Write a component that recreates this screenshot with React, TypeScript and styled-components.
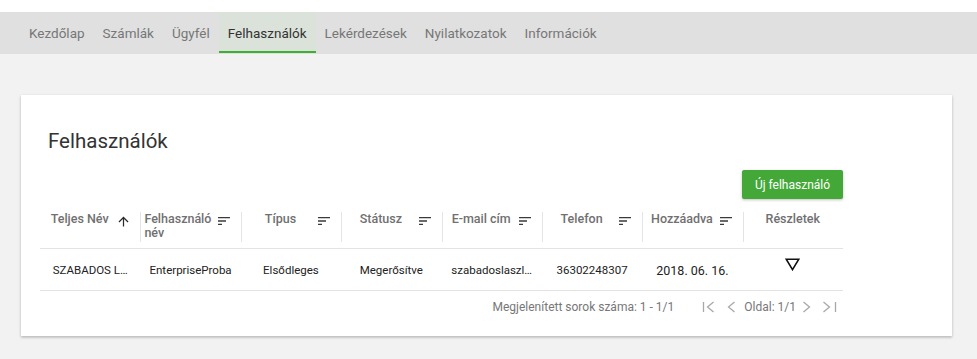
import React from 'react';
import styled, { createGlobalStyle } from 'styled-components';

const Global = createGlobalStyle`
  html, body { margin: 0; padding: 0; background: #f2f2f2; }
  body { font-family: Roboto, "Noto Sans", Arial, sans-serif; -webkit-font-smoothing: antialiased; }
`;

const Shell = styled.div`
  border-top: 12px solid #ffffff;
  min-height: 347px;
  background: #f2f2f2;
`;

const NavBar = styled.nav`
  height: 42px;
  background: #e0e0e0;
  display: flex;
  align-items: stretch;
  padding-left: 20px;
`;

const Tab = styled.a<{ $active?: boolean }>`
  display: flex;
  align-items: center;
  padding: 2px 9px 0;
  font-size: 13.5px;
  color: ${p => (p.$active ? '#333333' : '#777777')};
  background: ${p => (p.$active ? '#dbe2da' : 'transparent')};
  border-bottom: 2px solid ${p => (p.$active ? '#3cb034' : 'transparent')};
  margin-bottom: 1px;
  text-decoration: none;
  cursor: pointer;
`;

const Page = styled.main`
  padding: 41px 25px 20px 21px;
`;

const Card = styled.section`
  background: #ffffff;
  box-shadow: 0 1px 3px rgba(0, 0, 0, 0.2), 0 2px 2px rgba(0, 0, 0, 0.08);
  padding: 33px 109px 13px 19px;
`;

const Title = styled.h1`
  margin: 0 0 0 8px;
  font-size: 20.5px;
  line-height: 26px;
  font-weight: 400;
  color: #333333;
`;

const Toolbar = styled.div`
  display: flex;
  justify-content: flex-end;
  margin-top: 16px;
  margin-bottom: 13px;
`;

const GreenButton = styled.button`
  height: 29px;
  width: 101px;
  border: none;
  border-radius: 2px;
  background: #43a838;
  color: #ffffff;
  font-family: Roboto, "Noto Sans", Arial, sans-serif;
  font-size: 12px;
  box-shadow: 0 1px 3px rgba(0, 0, 0, 0.25);
  cursor: pointer;
`;

const Grid = styled.div`
  display: grid;
  grid-template-columns: repeat(8, 1fr);
  width: 803px;
`;

const HeadRow = styled(Grid)`
  padding-bottom: 6px;
  border-bottom: 1px solid #e3e3e3;
`;

const HeadCell = styled.div<{ $first?: boolean; $noIcon?: boolean }>`
  height: 30px;
  display: flex;
  align-items: flex-start;
  border-left: 1px solid ${p => (p.$first ? 'transparent' : '#e4e4e4')};
  padding: 0 ${p => (p.$noIcon ? '4px' : '9px')} 0 3px;
`;

const HeadLabel = styled.div`
  flex: 1;
  display: flex;
  justify-content: center;
  span {
    text-align: left;
    font-size: 12.5px;
    line-height: 14px;
    font-weight: 500;
    color: #707070;
  }
`;

const IconBox = styled.span`
  width: 16px;
  height: 16px;
  display: flex;
  align-items: center;
  justify-content: center;
  margin-top: 1px;
  flex: none;
`;

const BodyRow = styled(Grid)`
  height: 41px;
  border-bottom: 1px solid #e3e3e3;
  align-items: center;
`;

const Cell = styled.div<{ $big?: boolean }>`
  text-align: center;
  font-size: ${p => (p.$big ? '12.5px' : '11.5px')};
  color: #222222;
  white-space: nowrap;
  overflow: hidden;
  padding-top: ${p => (p.$big ? '2px' : '0')};
`;

const DetailCell = styled.div`
  display: flex;
  justify-content: center;
  padding-bottom: 10px;
`;

const Pager = styled.div`
  width: 803px;
  height: 32px;
  display: flex;
  align-items: center;
  justify-content: flex-end;
  padding-right: 6px;
  box-sizing: border-box;
  color: #777777;
  font-size: 12px;
`;

const PagerInfo = styled.span`
  margin-right: 28px;
`;

const PagerButton = styled.span<{ $gap: number }>`
  display: flex;
  align-items: center;
  color: #a8a8a8;
  margin-left: ${p => p.$gap}px;
`;

const PageLabel = styled.span`
  margin-left: 8px;
`;

const SortIcon = () => (
  <IconBox>
    <svg width="16" height="16" viewBox="0 0 24 24">
      <path fill="#3a3a3a" d="M3 18h6v-2H3v2zM3 6v2h18V6H3zm0 7h12v-2H3v2z" />
    </svg>
  </IconBox>
);

const ArrowUp = () => (
  <IconBox>
    <svg width="15" height="15" viewBox="0 0 24 24">
      <path fill="#2a2a2a" d="M4 12l1.41 1.41L11 7.83V20h2V7.83l5.58 5.59L20 12l-8-8-8 8z" />
    </svg>
  </IconBox>
);

const FirstIcon = () => (
  <svg width="13" height="14" viewBox="0 0 13 14" fill="none" stroke="currentColor" strokeWidth="1.3">
    <path d="M1.5 2v10M11.5 2L5.5 7l6 5" />
  </svg>
);
const PrevIcon = () => (
  <svg width="9" height="14" viewBox="0 0 9 14" fill="none" stroke="currentColor" strokeWidth="1.3">
    <path d="M7.5 2L1.5 7l6 5" />
  </svg>
);
const NextIcon = () => (
  <svg width="9" height="14" viewBox="0 0 9 14" fill="none" stroke="currentColor" strokeWidth="1.3">
    <path d="M1.5 2L7.5 7l-6 5" />
  </svg>
);
const LastIcon = () => (
  <svg width="15" height="14" viewBox="0 0 15 14" fill="none" stroke="currentColor" strokeWidth="1.3">
    <path d="M1.5 2L7.5 7l-6 5M13.5 2v10" />
  </svg>
);

const Triangle = () => (
  <svg width="15" height="13" viewBox="0 0 15 13">
    <polygon points="1.2,1.2 13.8,1.2 7.5,11.6" fill="none" stroke="#111" strokeWidth="1.6" strokeLinejoin="miter" />
  </svg>
);

const tabs = ['Kezdőlap', 'Számlák', 'Ügyfél', 'Felhasználók', 'Lekérdezések', 'Nyilatkozatok', 'Információk'];

const columns: { label: string; icon: 'up' | 'sort' | 'none' }[] = [
  { label: 'Teljes Név', icon: 'up' },
  { label: 'Felhasználó név', icon: 'sort' },
  { label: 'Típus', icon: 'sort' },
  { label: 'Státusz', icon: 'sort' },
  { label: 'E-mail cím', icon: 'sort' },
  { label: 'Telefon', icon: 'sort' },
  { label: 'Hozzáadva', icon: 'sort' },
  { label: 'Részletek', icon: 'none' },
];

export default function App() {
  return (
    <>
      <Global />
      <Shell>
        <NavBar>
          {tabs.map(t => (
            <Tab key={t} $active={t === 'Felhasználók'}>
              {t}
            </Tab>
          ))}
        </NavBar>
        <Page>
          <Card>
            <Title>Felhasználók</Title>
            <Toolbar>
              <GreenButton>Új felhasználó</GreenButton>
            </Toolbar>
            <HeadRow>
              {columns.map((c, i) => (
                <HeadCell key={c.label} $first={i === 0} $noIcon={c.icon === 'none'}>
                  <HeadLabel>
                    <span>{c.label}</span>
                  </HeadLabel>
                  {c.icon === 'up' && <ArrowUp />}
                  {c.icon === 'sort' && <SortIcon />}
                </HeadCell>
              ))}
            </HeadRow>
            <BodyRow>
              <Cell>SZABADOS L…</Cell>
              <Cell>EnterpriseProba</Cell>
              <Cell>Elsődleges</Cell>
              <Cell>Megerősítve</Cell>
              <Cell>szabadoslaszl…</Cell>
              <Cell>36302248307</Cell>
              <Cell $big>2018. 06. 16.</Cell>
              <DetailCell>
                <Triangle />
              </DetailCell>
            </BodyRow>
            <Pager>
              <PagerInfo>Megjelenített sorok száma: 1 - 1/1</PagerInfo>
              <PagerButton $gap={0}>
                <FirstIcon />
              </PagerButton>
              <PagerButton $gap={12}>
                <PrevIcon />
              </PagerButton>
              <PageLabel>Oldal: 1/1</PageLabel>
              <PagerButton $gap={6}>
                <NextIcon />
              </PagerButton>
              <PagerButton $gap={11}>
                <LastIcon />
              </PagerButton>
            </Pager>
          </Card>
        </Page>
      </Shell>
    </>
  );
}
